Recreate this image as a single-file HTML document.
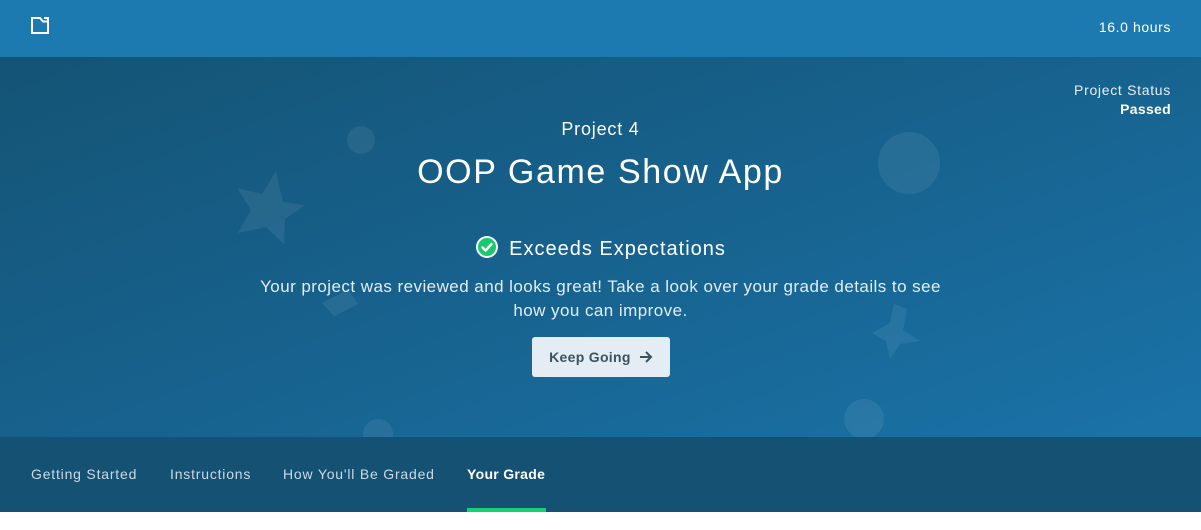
<!DOCTYPE html>
<html><head><meta charset="utf-8"><style>
*{margin:0;padding:0;box-sizing:border-box}
body{width:1201px;height:530px;overflow:hidden;background:#fff;font-family:"Liberation Sans",sans-serif;position:relative}
.top{position:absolute;left:0;top:0;width:1201px;height:57px;background:#1c7ab0}
.hero{position:absolute;left:0;top:57px;width:1201px;height:380px;background:linear-gradient(160deg,#145475 0%,#17628e 50%,#1a73a8 100%);overflow:hidden}
.tabs{position:absolute;left:0;top:437px;width:1201px;height:75px;background:#155173}
.tab{position:absolute;top:29px;font-size:14px;color:#c9dae6;white-space:nowrap;letter-spacing:0.8px}
.c{position:absolute;left:0;width:1201px;text-align:center;color:#fff}
</style></head><body>
<div class="top">
<svg style="position:absolute;left:31px;top:17px" width="19" height="17" viewBox="0 0 19 17"><path d="M1 1H9L12 4.5H17V16H1Z M13 1H17V4" fill="none" stroke="#fff" stroke-width="2"/></svg>
<div style="position:absolute;right:30px;top:19px;color:#fff;font-size:14px;letter-spacing:0.6px">16.0 hours</div>
</div>
<div class="hero">
<svg width="1201" height="380" style="position:absolute;left:0;top:0">
<g fill="#fff" fill-opacity="0.07">
<circle cx="361" cy="83" r="14"/>
<circle cx="909" cy="106" r="31"/>
<circle cx="864" cy="362" r="20"/>
<circle cx="378" cy="377" r="15"/>
<path d="M276 114 L283 145 L305 148 L285 162 L284 187 L266 170 L238 176 L251 153 L237 131 L262 137Z"/>
<path d="M907 252 L903 273 L920 284 L900 287 L890 302 L886 284 L872 276 L890 266 L894 247Z"/>
<path d="M322 243 L350 234 L358 250 L332 258Z" transform="rotate(-10 340 246)"/>
</g></svg>
<div style="position:absolute;right:30px;top:24px;text-align:right;color:#e6eef4;font-size:14px;line-height:19px;letter-spacing:0.7px">Project Status<br><b style="color:#fff;letter-spacing:0.3px">Passed</b></div>
<div class="c" style="top:62px;font-size:18px;letter-spacing:0.8px">Project 4</div>
<div class="c" style="top:96px;font-size:34px;letter-spacing:1.6px">OOP Game Show App</div>
<div class="c" style="top:178px;font-size:20px;letter-spacing:1px"><svg width="24" height="24" viewBox="0 0 24 24" style="vertical-align:-4px;margin-right:10px"><circle cx="12" cy="12" r="11" fill="#fff"/><circle cx="12" cy="12" r="9" fill="#16c96b"/><path d="M7.5 12.5 L10.5 15.5 L16.5 9" fill="none" stroke="#fff" stroke-width="2.4" stroke-linecap="round" stroke-linejoin="round"/></svg>Exceeds Expectations</div>
<div class="c" style="top:218px;font-size:17px;line-height:24px;color:#e3edf4;letter-spacing:0.45px">Your project was reviewed and looks great! Take a look over your grade details to see<br>how you can improve.</div>
<div style="position:absolute;left:532px;top:280px;width:138px;height:40px;background:#e4edf3;border-radius:3px;color:#3d525f;font-size:14px;font-weight:bold;text-align:center;line-height:40px;letter-spacing:0.3px">Keep Going <svg width="14" height="12" viewBox="0 0 14 12" style="vertical-align:-1px;margin-left:4px"><path d="M1 6H12 M7 1L12 6L7 11" fill="none" stroke="#3d525f" stroke-width="2"/></svg></div>
</div>
<div class="tabs">
<div class="tab" style="left:31px">Getting Started</div>
<div class="tab" style="left:170px">Instructions</div>
<div class="tab" style="left:283px">How You'll Be Graded</div>
<div class="tab" style="left:467px;color:#fff;font-weight:bold;letter-spacing:0.3px">Your Grade</div>
<div style="position:absolute;left:467px;top:71px;width:79px;height:4px;background:#16d073"></div>
</div>
</body></html>
